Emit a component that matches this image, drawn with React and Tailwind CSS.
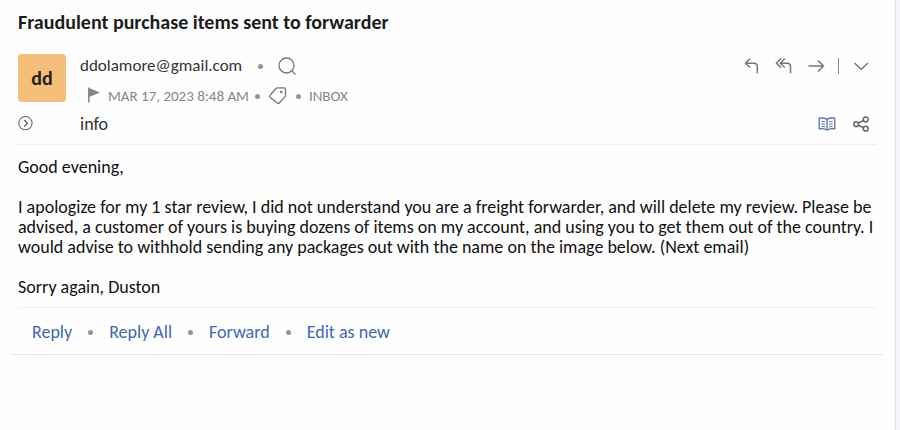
const Dot = () => <span className="size-[5px] shrink-0 rounded-full bg-[#949494]"></span>

const Icon = ({ children, className }) => (
  <svg viewBox="0 0 20 20" fill="none" stroke="currentColor" strokeWidth="1.3" aria-hidden="true" className={className}>
    {children}
  </svg>
)

const ReplyIcon = () => (
  <Icon className="size-5">
    <path d="M8 2.5 3.5 7.2 8 11.5M3.5 7.2H12c2 0 3.3 1.400 3.300 3.600v6.500" strokeWidth="1.5" />
  </Icon>
)

const ReplyAllIcon = () => (
  <Icon className="size-5">
    <path d="M7 2.300 2.500 7.200 7 11.700M10.800 2.500 6.300 7.200l4.500 4.300M6.300 7.200h6.900c2 0 3.300 1.400 3.300 3.600v6.500" strokeWidth="1.5" />
  </Icon>
)

const ForwardIcon = () => (
  <Icon className="size-5">
    <path d="M2.5 10h15M12 4.5l5.5 5.5-5.500 5.500" strokeWidth="1.5" />
  </Icon>
)

const ChevronIcon = () => (
  <Icon className="size-5">
    <path d="m3.500 7 6.700 6.300L17 7" strokeWidth="1.5" />
  </Icon>
)

const SearchIcon = () => (
  <Icon className="size-5">
    <circle cx="9.500" cy="9.500" r="7.500" />
    <path d="m15 15 3.500 3.500" />
  </Icon>
)

const TagIcon = () => (
  <Icon className="size-5">
    <path d="M9.500 1.800h6.300c1 0 1.700.7 1.700 1.700v6c0 .6-.2 1-.6 1.400l-5.400 5.800c-.8.900-1.900.900-2.700.1L2.300 11.600c-.8-.8-.8-1.800 0-2.600l5.700-6.500c.4-.5.900-.7 1.500-.7z" />
    <circle cx="13.300" cy="6" r="1.300" fill="currentColor" stroke="none" />
  </Icon>
)

const FlagIcon = () => (
  <Icon className="size-5">
    <path d="M4.800 1.500v15" strokeWidth="1.5" />
    <path d="m5 2 11 4.500-11 4.500z" fill="currentColor" stroke="none" />
  </Icon>
)

const ExpandIcon = () => (
  <Icon className="size-4">
    <circle cx="9.300" cy="9" r="8.300" />
    <path d="m7.800 5 3.900 4-3.900 4" strokeWidth="1.8" />
  </Icon>
)

const BookIcon = () => (
  <Icon className="size-5">
    <path d="M10 5.200C7.500 4 5 3.800 2.200 4.100v10.700c2.800-.3 5.300 0 7.800 1.200 2.500-1.200 5-1.500 7.800-1.200V4.100c-2.800-.3-5.300-.1-7.800 1.100zM10 5.200V16" />
    <path d="M4.300 7.200l3.700.7M4.300 9.700l3.700.7M4.300 12.200l3.700.7M15.700 7.200l-3.700.7M15.700 9.700l-3.700.7M15.700 12.200l-3.700.7" strokeWidth="1" />
  </Icon>
)

const ShareIcon = () => (
  <Icon className="size-5">
    <circle cx="5.200" cy="10.200" r="2.400" strokeWidth="1.5" />
    <circle cx="14.700" cy="5.500" r="2.400" strokeWidth="1.5" />
    <circle cx="14.700" cy="14.700" r="2.400" strokeWidth="1.5" />
    <path d="m7.300 9.100 5.300-2.600M7.300 11.300l5.300 2.400" strokeWidth="1.5" />
  </Icon>
)

const IconButton = ({ label, children, className = '' }) => (
  <button type="button" aria-label={label} className={`shrink-0 cursor-pointer ${className}`}>
    {children}
  </button>
)

const actions = ['Reply', 'Reply All', 'Forward', 'Edit as new']

const App = () => {
  return (
    <div className="flex min-h-screen bg-[#f6f6fa] font-['Carlito','Lato',sans-serif] text-lg leading-5 text-[#333]">
      <main className="mr-1 flex-1 border-r border-[#e4e4e8] bg-[#fefefe] pl-2.5 pr-3">
        <article className="border-b border-[#e5e5ea] pl-2 pr-1.5">
          <h1 className="pt-2.5 text-xl leading-6 font-bold text-[#1c1c1c]">Fraudulent purchase items sent to forwarder</h1>

          <header className="border-b border-[#f0edf0] pt-5 pb-2.5">
            <div className="flex gap-3.5">
              <div className="flex size-12 shrink-0 items-center justify-center rounded-sm bg-[#f5bf79] text-xl font-bold text-[#222]">dd</div>
              <div className="flex-1">
                <div className="flex h-6 items-center">
                  <span className="text-[17px]">ddolamore@gmail.com</span>
                  <div className="ml-4 flex items-center gap-3.5 text-[#777]">
                    <Dot />
                    <IconButton label="Search sender"><SearchIcon /></IconButton>
                  </div>
                </div>
                <div className="mt-2 flex items-center text-[15px] leading-5 text-[#858585]">
                  <IconButton label="Flag" className="ml-1 mr-1"><FlagIcon /></IconButton>
                  <time>MAR 17, 2023 8:48 AM</time>
                  <div className="ml-1.5 flex items-center gap-2">
                    <Dot />
                    <IconButton label="Tag" className="text-[#777]"><TagIcon /></IconButton>
                    <Dot />
                    <span>INBOX</span>
                  </div>
                </div>
              </div>
              <div className="flex h-6 items-center gap-3 pr-1.5 text-[#777]">
                <IconButton label="Reply"><ReplyIcon /></IconButton>
                <IconButton label="Reply all"><ReplyAllIcon /></IconButton>
                <IconButton label="Forward"><ForwardIcon /></IconButton>
                <span className="h-4 w-px bg-[#888]"></span>
                <IconButton label="More actions"><ChevronIcon /></IconButton>
              </div>
            </div>

            <div className="mt-2 flex items-center">
              <IconButton label="Show details" className="mr-11.5 text-[#666]"><ExpandIcon /></IconButton>
              <span>info</span>
              <div className="ml-auto flex gap-3.5 pr-1.5">
                <IconButton label="Reader view" className="text-[#5b70b5]"><BookIcon /></IconButton>
                <IconButton label="Share" className="text-[#666]"><ShareIcon /></IconButton>
              </div>
            </div>
          </header>

          <div className="space-y-5 pt-3 pb-2.5 text-[#111]">
            <p>Good evening,</p>
            <p>
              I apologize for my 1 star review, I did not understand you are a freight forwarder, and will delete my review. Please be
              advised, a customer of yours is buying dozens of items on my account, and using you to get them out of the country. I
              would advise to withhold sending any packages out with the name on the image below. (Next email)
            </p>
            <p>Sorry again, Duston</p>
          </div>

          <footer className="flex items-center gap-4 border-t border-dotted border-[#e8e1e4] pt-3.5 pb-3 pl-3.5">
            {actions.map((action, i) => (
              <div key={action} className="flex items-center gap-4">
                {i > 0 && <Dot />}
                <button type="button" className="cursor-pointer text-[#3f68b0]">{action}</button>
              </div>
            ))}
          </footer>
        </article>
      </main>
    </div>
  )
}

export default App
